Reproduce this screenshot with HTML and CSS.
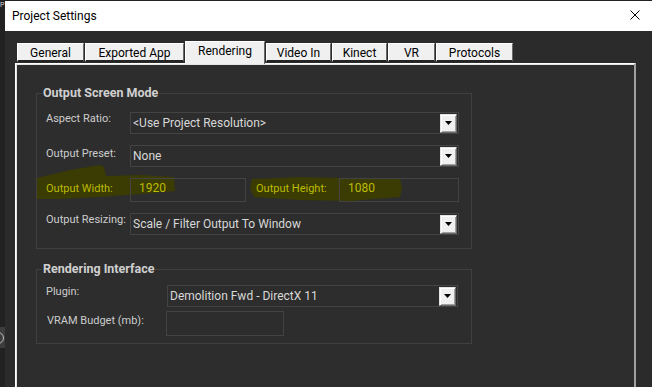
FILE: index.html
```html
<!DOCTYPE html>
<html lang="en">
<head>
    <meta charset="UTF-8">
    <title>Project Settings</title>
    <link rel="stylesheet" href="styles.css">
</head>
<body>
    <div class="backdrop">
        <span class="backdrop-letter">P</span>
        <span class="backdrop-chip"><span class="backdrop-ring"></span></span>
    </div>

    <div class="dialog">
        <div class="titlebar">
            <span class="title">Project Settings</span>
            <svg class="close" width="10" height="10" viewBox="0 0 10 10">
                <path d="M0.5 0.5L9.5 9.5M9.5 0.5L0.5 9.5" stroke="#000" stroke-width="1" fill="none"/>
            </svg>
        </div>

        <div class="dialog-body">
            <div class="tabs">
                <div class="tab">General</div>
                <div class="tab">Exported App</div>
                <div class="tab tab-active">Rendering</div>
                <div class="tab">Video In</div>
                <div class="tab">Kinect</div>
                <div class="tab">VR</div>
                <div class="tab">Protocols</div>
            </div>

            <div class="panel">
                <fieldset class="group group-screen">
                    <legend>Output Screen Mode</legend>

                    <div class="row">
                        <span class="label">Aspect Ratio:</span>
                        <div class="combo">
                            <span>&lt;Use Project Resolution&gt;</span>
                            <span class="combo-btn"><svg width="7" height="4" viewBox="0 0 7 4"><path d="M0 0H7L3.5 4Z" fill="#000"/></svg></span>
                        </div>
                    </div>

                    <div class="row">
                        <span class="label label-low">Output Preset:</span>
                        <div class="combo">
                            <span>None</span>
                            <span class="combo-btn"><svg width="7" height="4" viewBox="0 0 7 4"><path d="M0 0H7L3.5 4Z" fill="#000"/></svg></span>
                        </div>
                    </div>

                    <div class="row row-marked">
                        <!-- highlighter strokes drawn over the screenshot -->
                        <svg class="marker" width="380" height="44" viewBox="0 0 380 44">
                            <path d="M1 16 L9 14 L34 8 L64 3 L68 5 L70 14 L104 13 L138 15 L139 29 L104 32 L64 35 L24 37 L1 37 Z" fill="#3b3b04"/>
                            <path d="M216 17 L264 15 L304 16 L364 17 L366 26 L364 35 L314 39 L264 38 L218 35 L214 26 Z" fill="#3b3b04"/>
                        </svg>
                        <span class="label label-mark">Output Width:</span>
                        <div class="field field-mark field-width">1920</div>
                        <span class="label label-mark label-height">Output Height:</span>
                        <div class="field field-mark field-height">1080</div>
                    </div>

                    <div class="row">
                        <span class="label">Output Resizing:</span>
                        <div class="combo">
                            <span>Scale / Filter Output To Window</span>
                            <span class="combo-btn"><svg width="7" height="4" viewBox="0 0 7 4"><path d="M0 0H7L3.5 4Z" fill="#000"/></svg></span>
                        </div>
                    </div>
                </fieldset>

                <fieldset class="group group-interface">
                    <legend>Rendering Interface</legend>

                    <div class="row">
                        <span class="label label-wide">Plugin:</span>
                        <div class="combo combo-plugin">
                            <span>Demolition Fwd - DirectX 11</span>
                            <span class="combo-btn"><svg width="7" height="4" viewBox="0 0 7 4"><path d="M0 0H7L3.5 4Z" fill="#000"/></svg></span>
                        </div>
                    </div>

                    <div class="row row-vram">
                        <span class="label label-wide label-vram">VRAM Budget (mb):</span>
                        <div class="field field-vram"></div>
                    </div>
                </fieldset>
            </div>
        </div>
    </div>
</body>
</html>
```

FILE: styles.css
```css
:root {
    --fondo: #2d2d2d;
    --borde-campo: #434343;
    --texto-label: #cccccc;
    --texto-campo: #d8d8d8;
    --marcador: #bcbc00;
    --tab: #f0f0f0;
}

* {
    box-sizing: border-box;
}

body {
    margin: 0;
    width: 652px;
    height: 387px;
    overflow: hidden;
    display: flex;
    background: #222222;
    font-family: Roboto, "Noto Sans", sans-serif;
}

/* window behind the dialog */
.backdrop {
    width: 5px;
    flex: none;
    display: flex;
    flex-direction: column;
    overflow: hidden;
}

.backdrop-letter {
    font-size: 7px;
    line-height: 10px;
    color: #cfcfcf;
}

.backdrop-chip {
    margin-top: 317px;
    height: 21px;
    background: #3d3d3d;
    display: flex;
    align-items: center;
    overflow: hidden;
}

.backdrop-ring {
    flex: none;
    width: 12px;
    height: 12px;
    border: 1.5px solid #bdbdbd;
    border-radius: 50%;
    margin-left: -8px;
}

.dialog {
    flex: 1;
    display: flex;
    flex-direction: column;
    margin-top: 1px;
}

.titlebar {
    height: 30px;
    flex: none;
    background: #ffffff;
    display: flex;
    align-items: center;
    justify-content: space-between;
    padding: 0 12px 0 7px;
    font-size: 12px;
    color: #000000;
}

.close {
    display: block;
    margin-top: -2px;
}

.dialog-body {
    flex: 1;
    background: #2b2b2b;
    padding: 10px 16px 0 10px;
    display: flex;
    flex-direction: column;
}

/* tabs */
.tabs {
    display: flex;
    align-items: flex-end;
    gap: 1px;
    height: 23px;
    margin: 0 0 -1px 2px;
    flex: none;
}

.tab {
    height: 19px;
    margin-bottom: 2px;
    padding-top: 2px;
    background: var(--tab);
    border-top: 1px solid #ffffff;
    border-left: 1px solid #ffffff;
    border-right: 1px solid #696969;
    border-bottom: 2px solid #242424;
    font-size: 12px;
    line-height: 14px;
    text-align: center;
    color: #000000;
}

.tab:nth-child(1) { width: 67px; }
.tab:nth-child(2) { width: 99px; }
.tab:nth-child(3) { width: 80px; }
.tab:nth-child(4) { width: 65px; }
.tab:nth-child(5) { width: 55px; }
.tab:nth-child(6) { width: 47px; }
.tab:nth-child(7) { width: 77px; }

.tab-active {
    height: 23px;
    margin-bottom: 0;
    border-bottom: none;
    position: relative;
    z-index: 1;
}

.panel {
    flex: 1;
    background: var(--fondo);
    border-top: 1px solid #ffffff;
    border-left: 1px solid #ffffff;
    border-right: 2px solid #a0a0a0;
    box-shadow: inset 1px 1px 0 #e3e3e3;
    padding: 0 0 0 20px;
}

/* group boxes */
.group {
    width: 436px;
    min-width: 0;
    margin: 0;
    border: 1px solid #404040;
}

.group-screen {
    margin-top: 22px;
    padding: 12px 12px 13px 5px;
}

.group-interface {
    margin-top: 13px;
    padding: 9px 12px 7px 5px;
}

legend {
    padding: 0 1px;
    font-size: 12.5px;
    font-weight: 700;
    line-height: 14px;
    color: #d0d0d0;
}

.row {
    display: flex;
    align-items: flex-start;
    padding-left: 4px;
}

.row + .row {
    margin-top: 11px;
}

.row-vram {
    margin-top: 4px !important;
}

.label {
    width: 84px;
    flex: none;
    font-size: 11px;
    line-height: 14px;
    color: var(--texto-label);
    white-space: nowrap;
}

.label-low { padding-top: 2px; }
.label-wide { width: 121px; }
.label-vram { padding-top: 3px; padding-left: 1px; }

.combo {
    width: 329px;
    height: 22px;
    border: 1px solid var(--borde-campo);
    display: flex;
    align-items: center;
    justify-content: space-between;
    padding: 0 1px 0 2px;
    font-size: 12px;
    color: var(--texto-campo);
    white-space: nowrap;
}

.combo-plugin { width: 291px; }

.combo-btn {
    width: 17px;
    height: 19px;
    flex: none;
    display: flex;
    align-items: center;
    justify-content: center;
    background: var(--tab);
    border: 1px solid;
    border-color: #e3e3e3 #696969 #696969 #e3e3e3;
    box-shadow: inset 1px 1px 0 #ffffff, inset -1px -1px 0 #a0a0a0;
}

.combo-btn svg {
    display: block;
}

.field {
    height: 24px;
    border: 1px solid var(--borde-campo);
    padding: 2px 0 0 8px;
    font-size: 12px;
    line-height: 14px;
    color: var(--texto-campo);
}

/* highlighted width / height row */
.row-marked {
    position: relative;
}

.marker {
    position: absolute;
    left: -6px;
    top: -16px;
}

.row-marked .label,
.row-marked .field {
    position: relative;
}

.label-mark {
    padding-top: 4px;
    color: var(--marcador);
}

.field-mark { color: var(--marcador); }
.field-width { width: 116px; }
.label-height { width: 83px; margin-left: 10px; }
.field-height { width: 120px; }

.field-vram {
    width: 118px;
    height: 25px;
    margin-left: -1px;
}
```
